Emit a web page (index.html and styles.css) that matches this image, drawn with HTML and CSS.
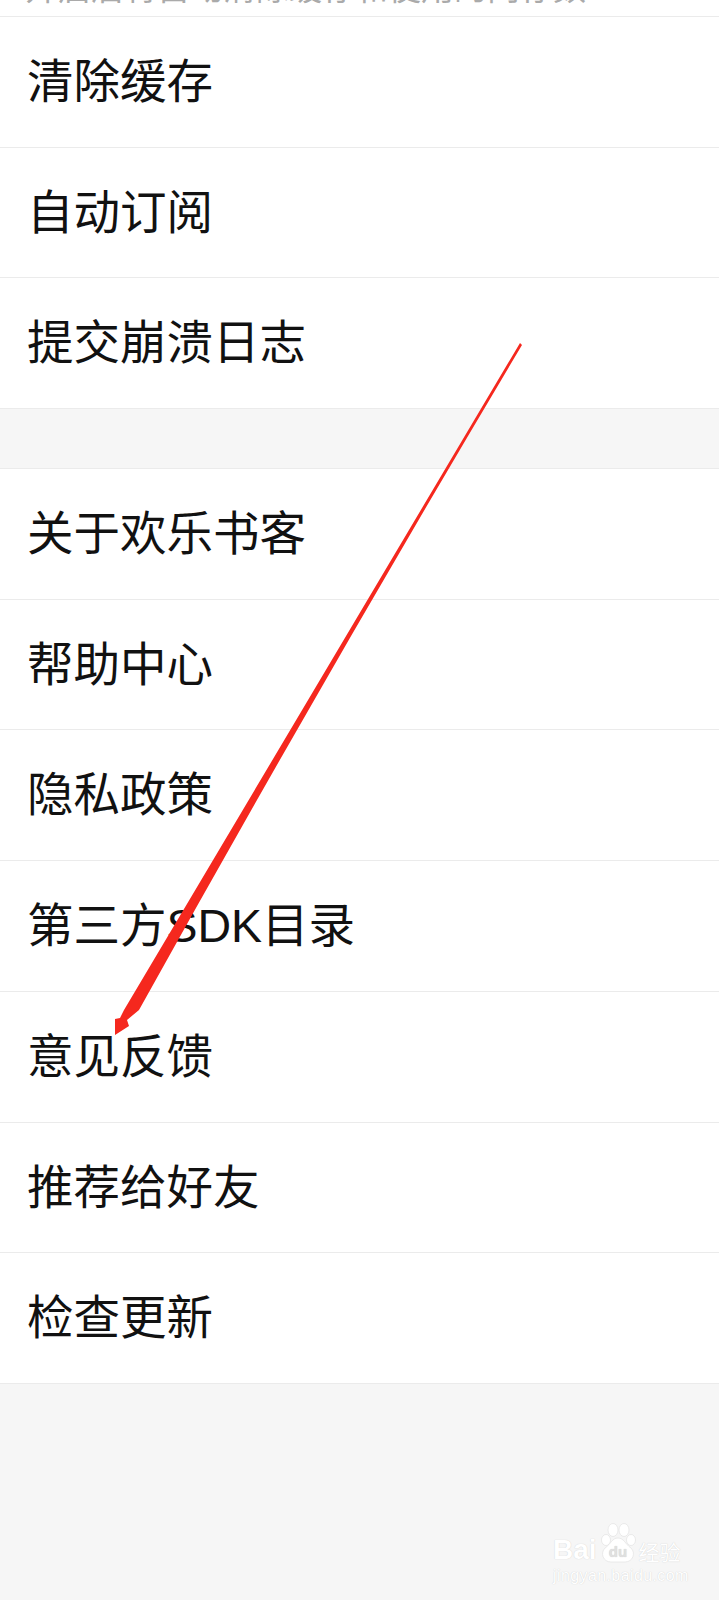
FILE: index.html
```html
<!DOCTYPE html>
<html lang="zh-CN">

<head>
   <meta charset="UTF-8">
   <meta name="viewport" content="width=device-width, initial-scale=1.0">
   <title>设置</title>
   <link rel="stylesheet" href="styles.css">
</head>

<body>

   <div class="clipped-note"><span>开启后将自动清除缓存和使用的内存数</span></div>

   <ul class="group">
       <li>清除缓存</li>
       <li>自动订阅</li>
       <li>提交崩溃日志</li>
   </ul>

   <ul class="group second">
       <li>关于欢乐书客</li>
       <li>帮助中心</li>
       <li>隐私政策</li>
       <li>第三方SDK目录</li>
       <li>意见反馈</li>
       <li>推荐给好友</li>
       <li>检查更新</li>
   </ul>

   <!-- red arrow drawn over the list -->
   <svg class="arrow" width="719" height="1600" viewBox="0 0 719 1600">
       <path d="M520 343 L522 345 Q324 677 139 1010 L127 1020 L129 1026 L115 1035 L115 1019 L120 1018 L124 1010 Z" fill="#f5281e"/>
   </svg>

   <div class="watermark">
       <div class="mark-row">
           <span class="mark-bai">Bai</span>
           <svg class="paw" width="36" height="40" viewBox="0 0 36 40">
               <ellipse cx="6" cy="17" rx="4.5" ry="5.5"/>
               <ellipse cx="13" cy="7" rx="5" ry="6.5"/>
               <ellipse cx="24" cy="7" rx="5" ry="6.5"/>
               <ellipse cx="31" cy="17" rx="4.5" ry="5.5"/>
               <path d="M18 15 C12 15 11 21 5 25 C0 30 3 39 11 39 C15 39 21 39 25 39 C33 39 36 30 31 25 C25 21 24 15 18 15 Z"/>
               <text x="18" y="34" text-anchor="middle">du</text>
           </svg>
           <span class="mark-cn">经验</span>
       </div>
       <div class="mark-url">jingyan.baidu.com</div>
   </div>

</body>

</html>
```
FILE: styles.css
```css
body {
    margin: 0;
    height: 1600px;
    overflow: hidden;
    background-color: #f6f6f6;
    font-family: "Liberation Sans", "Noto Sans CJK SC", sans-serif;
    color: #111;
}

ul {
    margin: 0;
    padding: 0;
    list-style: none;
}

.clipped-note {
    height: 16px;
    overflow: hidden;
    background-color: #fff;
    color: #aaa;
    font-size: 33px;
    line-height: 34px;
    padding-left: 25px;
}

.clipped-note span {
    display: block;
    margin-top: -28px;
    white-space: nowrap;
}

.group {
    background-color: #fff;
    border-top: 1px solid #ebebeb;
}

.group li {
    height: 129.7px;
    line-height: 130px;
    padding-left: 27px;
    font-size: 46.5px;
    border-bottom: 1px solid #ebebeb;
}

.second {
    margin-top: 59px;
}

.arrow {
    position: absolute;
    top: 0;
    left: 0;
}

.watermark {
    position: absolute;
    left: 553px;
    top: 1523px;
    color: #fff;
    text-shadow: 0 0 1px #c8c8c8;
}

.mark-row {
    display: flex;
    align-items: flex-end;
    height: 40px;
    gap: 3px;
}

.mark-bai {
    font-size: 28px;
    font-weight: bold;
    line-height: 26px;
}

.paw {
    fill: #fff;
    stroke: #e2e2e2;
    stroke-width: 0.7px;
}

.paw text {
    font-size: 15px;
    font-weight: bold;
    fill: #e0e0e0;
    stroke: none;
}

.mark-cn {
    font-family: "Noto Sans CJK SC", sans-serif;
    font-size: 21px;
    line-height: 24px;
}

.mark-url {
    margin-top: 3px;
    font-size: 16px;
    letter-spacing: 0.4px;
    line-height: 20px;
    white-space: nowrap;
}
```
